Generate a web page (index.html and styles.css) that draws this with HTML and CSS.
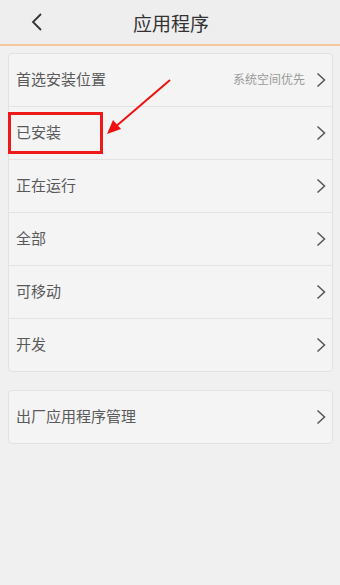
FILE: index.html
```html
<!DOCTYPE html>
<html lang="zh">
<head>
<meta charset="utf-8">
<link rel="stylesheet" href="styles.css">
</head>
<body>
<div class="header">
  <svg class="back" width="12" height="18" viewBox="0 0 12 18"><path d="M10 1 L2 9 L10 17" fill="none" stroke="#333" stroke-width="1.8"/></svg>
  <div class="title">应用程序</div>
</div>
<div class="card">
  <div class="row"><span class="label">首选安装位置</span><span class="value">系统空间优先</span><svg class="chev" width="10" height="16" viewBox="0 0 10 16"><path d="M1.5 1.5 L8.5 8 L1.5 14.5" fill="none" stroke="#555" stroke-width="1.5"/></svg></div>
  <div class="row"><span class="label">已安装</span><svg class="chev" width="10" height="16" viewBox="0 0 10 16"><path d="M1.5 1.5 L8.5 8 L1.5 14.5" fill="none" stroke="#555" stroke-width="1.5"/></svg></div>
  <div class="row"><span class="label">正在运行</span><svg class="chev" width="10" height="16" viewBox="0 0 10 16"><path d="M1.5 1.5 L8.5 8 L1.5 14.5" fill="none" stroke="#555" stroke-width="1.5"/></svg></div>
  <div class="row"><span class="label">全部</span><svg class="chev" width="10" height="16" viewBox="0 0 10 16"><path d="M1.5 1.5 L8.5 8 L1.5 14.5" fill="none" stroke="#555" stroke-width="1.5"/></svg></div>
  <div class="row"><span class="label">可移动</span><svg class="chev" width="10" height="16" viewBox="0 0 10 16"><path d="M1.5 1.5 L8.5 8 L1.5 14.5" fill="none" stroke="#555" stroke-width="1.5"/></svg></div>
  <div class="row"><span class="label">开发</span><svg class="chev" width="10" height="16" viewBox="0 0 10 16"><path d="M1.5 1.5 L8.5 8 L1.5 14.5" fill="none" stroke="#555" stroke-width="1.5"/></svg></div>
</div>
<div class="card second">
  <div class="row"><span class="label">出厂应用程序管理</span><svg class="chev" width="10" height="16" viewBox="0 0 10 16"><path d="M1.5 1.5 L8.5 8 L1.5 14.5" fill="none" stroke="#555" stroke-width="1.5"/></svg></div>
</div>
<div class="highlight"></div>
<svg class="arrow" width="340" height="585" viewBox="0 0 340 585">
  <line x1="170" y1="80" x2="114" y2="128" stroke="#f01010" stroke-width="2"/>
  <polygon points="107,134 113,120 121,129" fill="#f01010"/>
</svg>
</body>
</html>
```

FILE: styles.css
```css
html, body {
  margin: 0;
  padding: 0;
}
body {
  width: 340px;
  height: 585px;
  background: #f0f0f0;
  font-family: "Noto Sans CJK SC", "Noto Sans", sans-serif;
  position: relative;
  overflow: hidden;
}
.header {
  height: 44px;
  background: #eeeeee;
  border-bottom: 2px solid #f6c8a2;
  display: flex;
  align-items: center;
  justify-content: center;
  position: relative;
}
.back {
  position: absolute;
  left: 31px;
  top: 13px;
}
.title {
  font-size: 19px;
  color: #333;
  line-height: 1;
  margin-left: 2px;
}
.card {
  margin: 7px 7px 0 8px;
  background: #f4f4f4;
  border: 1px solid #e2e2e2;
  border-radius: 4px;
}
.card.second {
  margin-top: 18px;
}
.row {
  height: 52px;
  display: flex;
  align-items: center;
  padding: 0 6px 0 7px;
  border-top: 1px solid #e3e3e3;
}
.row:first-child {
  border-top: none;
}
.label {
  font-size: 15px;
  line-height: 18px;
  color: #595959;
  flex: 1;
  margin-top: -2px;
}
.value {
  font-size: 12px;
  line-height: 14px;
  color: #9a9a9a;
  margin-right: 11px;
  margin-top: -2px;
}
.chev {
  display: block;
}
.highlight {
  position: absolute;
  left: 8px;
  top: 112px;
  width: 89px;
  height: 36px;
  border: 3px solid #ee1a1a;
}
.arrow {
  position: absolute;
  left: 0;
  top: 0;
}
```
